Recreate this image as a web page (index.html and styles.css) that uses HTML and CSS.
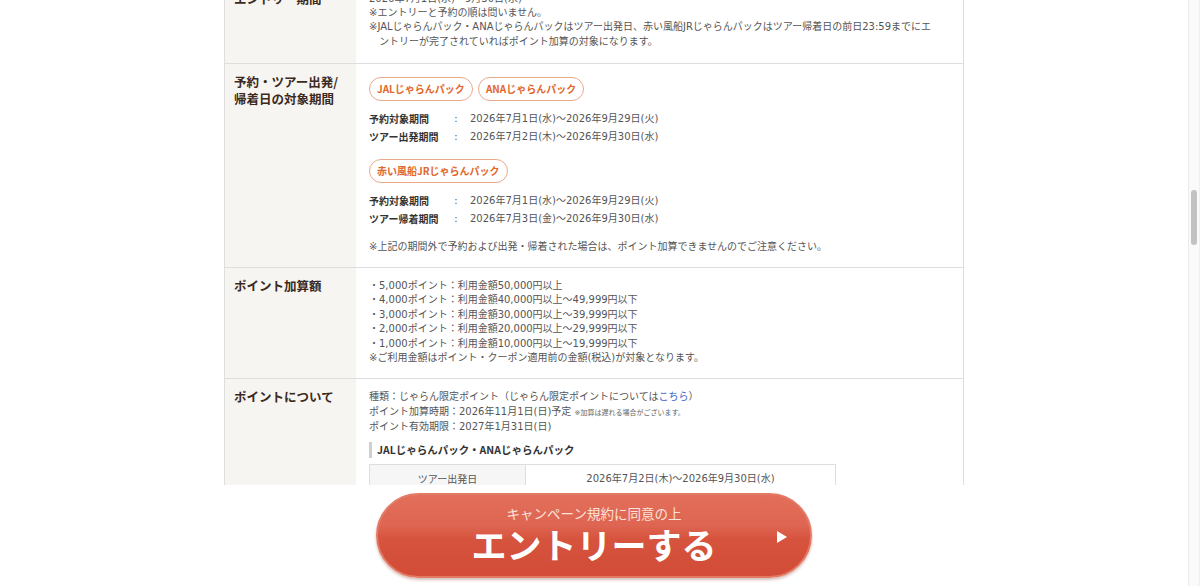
FILE: index.html
```html
<!DOCTYPE html>
<html lang="ja">
<head>
<meta charset="utf-8">
<title>キャンペーン規約</title>
<link rel="stylesheet" href="styles.css">
</head>
<body>
<div class="app">
  <div class="page">
    <main class="viewport">
      <div class="terms">
        <div class="row row-first">
          <div class="th">エントリー期間</div>
          <div class="td">
            <p class="txt">2026年7月1日(水)〜9月30日(水)</p>
            <p class="txt">※エントリーと予約の順は問いません。</p>
            <p class="txt hang">※JALじゃらんパック・ANAじゃらんパックはツアー出発日、赤い風船JRじゃらんパックはツアー帰着日の前日23:59までにエ<br>ントリーが完了されていればポイント加算の対象になります。</p>
          </div>
        </div>

        <div class="row">
          <div class="th">予約・ツアー出発/<br>帰着日の対象期間</div>
          <div class="td">
            <div class="badges">
              <span class="badge">JALじゃらんパック</span>
              <span class="badge">ANAじゃらんパック</span>
            </div>
            <dl class="period">
              <dt>予約対象期間</dt><dd class="colon">:</dd><dd>2026年7月1日(水)〜2026年9月29日(火)</dd>
              <dt>ツアー出発期間</dt><dd class="colon">:</dd><dd>2026年7月2日(木)〜2026年9月30日(水)</dd>
            </dl>
            <div class="badges badges-gap">
              <span class="badge">赤い風船JRじゃらんパック</span>
            </div>
            <dl class="period">
              <dt>予約対象期間</dt><dd class="colon">:</dd><dd>2026年7月1日(水)〜2026年9月29日(火)</dd>
              <dt>ツアー帰着期間</dt><dd class="colon">:</dd><dd>2026年7月3日(金)〜2026年9月30日(水)</dd>
            </dl>
            <p class="txt note">※上記の期間外で予約および出発・帰着された場合は、ポイント加算できませんのでご注意ください。</p>
          </div>
        </div>

        <div class="row">
          <div class="th">ポイント加算額</div>
          <div class="td">
            <ul class="points">
              <li>・5,000ポイント：利用金額50,000円以上</li>
              <li>・4,000ポイント：利用金額40,000円以上〜49,999円以下</li>
              <li>・3,000ポイント：利用金額30,000円以上〜39,999円以下</li>
              <li>・2,000ポイント：利用金額20,000円以上〜29,999円以下</li>
              <li>・1,000ポイント：利用金額10,000円以上〜19,999円以下</li>
              <li>※ご利用金額はポイント・クーポン適用前の金額(税込)が対象となります。</li>
            </ul>
          </div>
        </div>

        <div class="row">
          <div class="th">ポイントについて</div>
          <div class="td">
            <ul class="points">
              <li>種類：じゃらん限定ポイント（じゃらん限定ポイントについては<a class="link" href="#">こちら</a>）</li>
              <li>ポイント加算時期：2026年11月1日(日)予定 <small class="tiny">※加算は遅れる場合がございます。</small></li>
              <li>ポイント有効期限：2027年1月31日(日)</li>
            </ul>
            <h3 class="subhead">JALじゃらんパック・ANAじゃらんパック</h3>
            <table class="sched">
              <tr>
                <th>ツアー出発日</th>
                <td>2026年7月2日(木)〜2026年9月30日(水)</td>
              </tr>
              <tr>
                <th>ポイント加算時期</th>
                <td>2026年11月1日(日)予定</td>
              </tr>
            </table>
          </div>
        </div>
      </div>
    </main>
    <footer class="entry-bar">
      <a class="entry-btn" href="#">
        <span class="entry-sub">キャンペーン規約に同意の上</span>
        <span class="entry-main">エントリーする</span>
        <span class="entry-arrow"></span>
      </a>
    </footer>
  </div>
  <div class="scrollbar"><div class="thumb"></div></div>
</div>
</body>
</html>
```

FILE: styles.css
```css
* { box-sizing: border-box; }
html, body { margin: 0; padding: 0; background: #fff; }
body {
  font-family: "Noto Sans CJK JP", "Noto Sans", sans-serif;
  color: #555;
  width: 1200px;
  height: 586px;
  overflow: hidden;
}
.app { display: flex; width: 1200px; height: 586px; }
.page { flex: 1; display: flex; flex-direction: column; min-width: 0; }
.viewport { height: 485px; overflow: hidden; }
.terms {
  width: 740px;
  margin: -20px auto 0;
  border: 1px solid #dedede;
  border-bottom: none;
}
.row {
  display: grid;
  grid-template-columns: 131px 1fr;
  border-bottom: 1px solid #dedede;
}
.th {
  background: #f7f5f1;
  padding: 9px 6px 13px 9px;
  font-size: 12.5px;
  line-height: 17px;
  font-weight: bold;
  color: #3b2a1d;
}
.td {
  padding: 11px 16px 13px 13px;
  font-family: "DejaVu Sans", "Noto Sans CJK JP", sans-serif;
  font-size: 10px;
  line-height: 14.2px;
  color: #555;
}
.row-first .td { padding-bottom: 14px; }
.txt { margin: 0; white-space: nowrap; }
.hang { padding-left: 1em; text-indent: -1em; }

.badges { display: flex; gap: 5px; margin-top: 2px; }
.badges-gap { margin-top: 13px; }
.badge {
  display: inline-flex;
  align-items: center;
  height: 24px;
  padding: 0 7px;
  border: 1px solid #eba98b;
  border-radius: 12px;
  color: #e2672c;
  font-family: "Noto Sans CJK JP", sans-serif;
  font-weight: bold;
  font-size: 10px;
  background: #fff;
}
.period {
  display: grid;
  grid-template-columns: 80px 14px 1fr;
  margin: 9px 0 0;
  line-height: 18px;
}
.period dt { font-weight: bold; color: #333; font-family: "Noto Sans CJK JP", sans-serif; }
.period dd { margin: 0; }
.period dd.colon { text-align: center; }
.period dd:not(.colon) { padding-left: 7px; }
.note { margin-top: 12px; }

.points { list-style: none; margin: 0; padding: 0; line-height: 14.4px; }
.link { color: #3d63c9; text-decoration: none; }
.tiny { font-size: 7px; color: #666; }

.subhead {
  margin: 7px 0 0;
  font-family: "Noto Sans CJK JP", sans-serif;
  font-size: 10.5px;
  line-height: 16px;
  font-weight: bold;
  color: #333;
  border-left: 3px solid #cfcfcf;
  padding-left: 5px;
}
.sched {
  margin-top: 6px;
  width: 467px;
  border-collapse: collapse;
  font-size: 10px;
}
.sched th, .sched td {
  border: 1px solid #dedede;
  height: 30px;
  text-align: center;
  font-weight: normal;
  color: #555;
}
.sched th { width: 156px; background: #f6f6f6; font-family: "Noto Sans CJK JP", sans-serif; }

.entry-bar {
  height: 101px;
  background: #fff;
  display: flex;
  justify-content: center;
  padding-top: 8px;
}
.entry-btn {
  position: relative;
  width: 436px;
  height: 85px;
  border-radius: 43px;
  border: 2px solid #e37a66;
  background: linear-gradient(to bottom, #e26f5b 0%, #de6551 38%, #d6533d 55%, #d24c37 100%);
  box-shadow: 0 2px 3px rgba(120, 40, 20, 0.3);
  display: flex;
  flex-direction: column;
  align-items: center;
  padding-top: 10px;
  text-decoration: none;
  color: #fff;
}
.entry-sub {
  font-size: 13.5px;
  line-height: 16px;
  color: #fbe2da;
}
.entry-main {
  margin-top: 4px;
  font-size: 35px;
  line-height: 38px;
  font-weight: bold;
  color: #fff;
}
.entry-arrow {
  position: absolute;
  left: 399px;
  top: 36px;
  width: 0;
  height: 0;
  border-top: 6px solid transparent;
  border-bottom: 6px solid transparent;
  border-left: 10px solid #fff;
}

.scrollbar {
  width: 12px;
  height: 586px;
  background: #fafafa;
  border-left: 1px solid #ebebeb;
  border-right: 1px solid #f0f0f0;
  padding-left: 2px;
  padding-top: 190px;
}
.thumb {
  width: 6px;
  height: 55px;
  border-radius: 3px;
  background: #c2c2c2;
}
```
